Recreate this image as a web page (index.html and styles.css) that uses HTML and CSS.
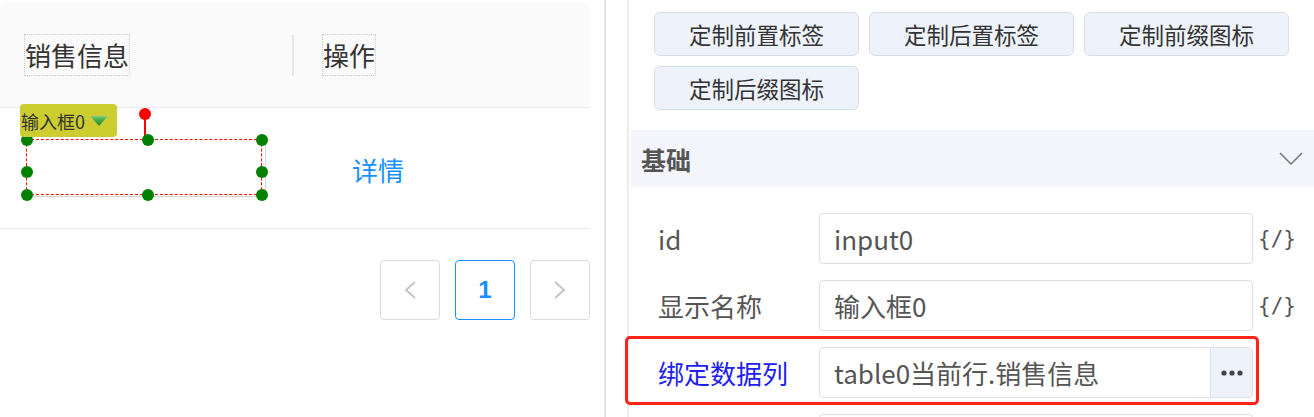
FILE: index.html
```html
<!DOCTYPE html>
<html lang="zh-CN">
<head>
  <meta charset="UTF-8">
  <title>表单设计器</title>
  <link rel="stylesheet" href="styles.css">
</head>
<body>
  <div class="page">
    <!-- 设计区 -->
    <div class="designer">
      <div class="table-head">
        <div class="th col1"><span>销售信息</span></div>
        <div class="sep"></div>
        <div class="th col2"><span>操作</span></div>
      </div>
      <div class="table-row">
        <div class="td col1">
          <div class="widget">
            <div class="tag">输入框0
              <svg width="18" height="10" viewBox="0 0 18 10">
                <defs>
                  <linearGradient id="tri" x1="0" y1="0" x2="0" y2="1">
                    <stop offset="0" stop-color="#7fd07f"/>
                    <stop offset="0.35" stop-color="#4cae4c"/>
                    <stop offset="1" stop-color="#2a8a2a"/>
                  </linearGradient>
                </defs>
                <polygon points="0,0 18,0 9,10" fill="url(#tri)"/>
              </svg>
            </div>
            <div class="rotate"></div>
            <div class="sel">
              <i class="dot" style="left:0;top:0"></i>
              <i class="dot" style="left:121px;top:0"></i>
              <i class="dot" style="left:235px;top:0"></i>
              <i class="dot" style="left:0;top:32px"></i>
              <i class="dot" style="left:235px;top:32px"></i>
              <i class="dot" style="left:0;top:55px"></i>
              <i class="dot" style="left:121px;top:55px"></i>
              <i class="dot" style="left:235px;top:55px"></i>
            </div>
          </div>
        </div>
        <div class="td col2"><a class="link">详情</a></div>
      </div>
      <div class="pager">
        <div class="page-btn">
          <svg width="14" height="20" viewBox="0 0 14 20"><polyline points="12,2 3,10 12,18" fill="none" stroke="#c4c4c4" stroke-width="2"/></svg>
        </div>
        <div class="page-btn active">1</div>
        <div class="page-btn">
          <svg width="14" height="20" viewBox="0 0 14 20"><polyline points="2,2 11,10 2,18" fill="none" stroke="#c4c4c4" stroke-width="2"/></svg>
        </div>
      </div>
    </div>

    <!-- 属性面板 -->
    <div class="props">
      <div class="props-inner">
        <div class="btns">
          <button class="btn">定制前置标签</button>
          <button class="btn">定制后置标签</button>
          <button class="btn">定制前缀图标</button>
          <button class="btn">定制后缀图标</button>
        </div>
        <div class="section">
          <span class="section-title">基础</span>
          <svg width="24" height="13" viewBox="0 0 24 13"><polyline points="1,1 12,12 23,1" fill="none" stroke="#777" stroke-width="1.5"/></svg>
        </div>
        <div class="form">
          <div class="row">
            <div class="label">id</div>
            <div class="input">input0</div>
            <div class="code">{/}</div>
          </div>
          <div class="row">
            <div class="label">显示名称</div>
            <div class="input">输入框0</div>
            <div class="code">{/}</div>
          </div>
          <div class="row bound">
            <div class="label">绑定数据列</div>
            <div class="input">
              <span class="value">table0当前行.销售信息</span>
              <span class="addon">
                <svg width="22" height="6" viewBox="0 0 22 6"><circle cx="3" cy="3" r="2.6" fill="#444"/><circle cx="11" cy="3" r="2.6" fill="#444"/><circle cx="19" cy="3" r="2.6" fill="#444"/></svg>
              </span>
            </div>
          </div>
          <div class="row">
            <div class="label"></div>
            <div class="input"></div>
          </div>
        </div>
      </div>
    </div>
  </div>
</body>
</html>
```

FILE: styles.css
```css
body {
  margin: 0;
  background: #fff;
  font-family: "Noto Sans CJK SC", "Noto Sans", sans-serif;
}

.page {
  display: flex;
  width: 1314px;
  height: 417px;
  overflow: hidden;
}

/* 设计区 */
.designer {
  width: 590px;
  flex: none;
  padding-top: 3px;
}

.table-head {
  display: flex;
  align-items: center;
  height: 104px;
  background: #fafafa;
  border-bottom: 1px solid #e9e9e9;
  border-radius: 4px 4px 0 0;
}

.th {
  font-size: 26px;
  color: #333;
}

.th span {
  display: inline-block;
  line-height: 40px;
  border: 1px dotted #c8c8c8;
}

.th.col1 {
  width: 292px;
  padding-left: 24px;
  box-sizing: border-box;
}

.sep {
  width: 2px;
  height: 41px;
  background: #e6e6e6;
}

.th.col2 {
  padding-left: 28px;
}

.table-row {
  display: flex;
  height: 120px;
  border-bottom: 1px solid #ebebeb;
}

.td.col1 {
  width: 292px;
  padding: 31px 0 0 26px;
  box-sizing: border-box;
}

.td.col2 {
  display: flex;
  align-items: center;
  padding: 2px 0 0 60px;
}

.link {
  font-size: 26px;
  color: #1890ff;
}

.widget {
  position: relative;
  width: 240px;
  height: 58px;
  border: 1px solid #d4d4d4;
  border-top-color: transparent;
  border-left-color: transparent;
  box-sizing: border-box;
}

.tag {
  position: absolute;
  left: -7px;
  top: -36px;
  width: 97px;
  height: 33px;
  display: flex;
  align-items: center;
  gap: 5px;
  padding-left: 1px;
  box-sizing: border-box;
  background: #cdcd32;
  border-radius: 4px;
  font-size: 18px;
  color: #333;
  z-index: 1;
}

.rotate {
  position: absolute;
  left: 117px;
  top: -22px;
  width: 2px;
  height: 22px;
  background: #f00;
}

.rotate::before {
  content: '';
  position: absolute;
  left: -5px;
  top: -10px;
  width: 12px;
  height: 12px;
  border-radius: 50%;
  background: #f00;
}

.sel {
  position: absolute;
  left: -1px;
  top: -1px;
  width: 236px;
  height: 56px;
  border: 1px dashed #f00;
  box-sizing: border-box;
}

.dot {
  position: absolute;
  width: 12px;
  height: 12px;
  margin: -6px 0 0 -6px;
  border-radius: 50%;
  background: #008000;
}

.pager {
  display: flex;
  justify-content: flex-end;
  gap: 15px;
  margin-top: 31px;
}

.page-btn {
  width: 60px;
  height: 60px;
  display: flex;
  align-items: center;
  justify-content: center;
  border: 1px solid #d9d9d9;
  border-radius: 4px;
  box-sizing: border-box;
  font-family: "Liberation Sans", "Noto Sans", sans-serif;
  font-size: 24px;
  font-weight: bold;
  color: #1890ff;
}

.page-btn.active {
  border-color: #1890ff;
}

/* 属性面板 */
.props {
  flex: 1;
  margin-left: 14px;
  border-left: 2px solid #e2e2e2;
}

.props-inner {
  height: 100%;
  margin-left: 21px;
  border-left: 2px solid #ececec;
}

.btns {
  display: flex;
  flex-wrap: wrap;
  gap: 10px;
  padding: 12px 0 0 25px;
}

.btn {
  width: 205px;
  height: 44px;
  background: #eef2fa;
  border: 1px solid #d9dde6;
  border-radius: 6px;
  font-family: "Noto Sans CJK SC", sans-serif;
  font-size: 22.5px;
  color: #333;
  padding: 0;
}

.section {
  display: flex;
  align-items: center;
  justify-content: space-between;
  height: 57px;
  margin: 20px 0 0 2px;
  padding: 0 11px 0 10px;
  background: #f3f5fa;
}

.section-title {
  font-size: 25px;
  font-weight: bold;
  color: #555;
}

.form {
  padding: 26px 0 0 29px;
}

.row {
  position: relative;
  display: flex;
  align-items: center;
  height: 51px;
  margin-bottom: 16px;
}

.label {
  width: 161px;
  flex: none;
  font-size: 26px;
  color: #555;
}

.input {
  width: 434px;
  height: 51px;
  flex: none;
  display: flex;
  align-items: center;
  padding-left: 14px;
  border: 1px solid #dcdfe6;
  border-radius: 4px;
  box-sizing: border-box;
  font-size: 26px;
  color: #555;
  overflow: hidden;
}

.value {
  flex: 1;
}

.addon {
  width: 41px;
  height: 100%;
  display: flex;
  align-items: center;
  justify-content: center;
  background: #eef2fa;
  border-left: 1px solid #dcdfe6;
}

.code {
  margin-left: 5px;
  font-family: "DejaVu Sans Mono", monospace;
  font-size: 21px;
  color: #555;
}

.bound .label {
  color: #2020ee;
}

.bound::after {
  content: '';
  position: absolute;
  left: -33px;
  top: -11px;
  width: 634px;
  height: 69px;
  border: 3px solid #ff2318;
  border-radius: 5px;
  box-sizing: border-box;
}
```
